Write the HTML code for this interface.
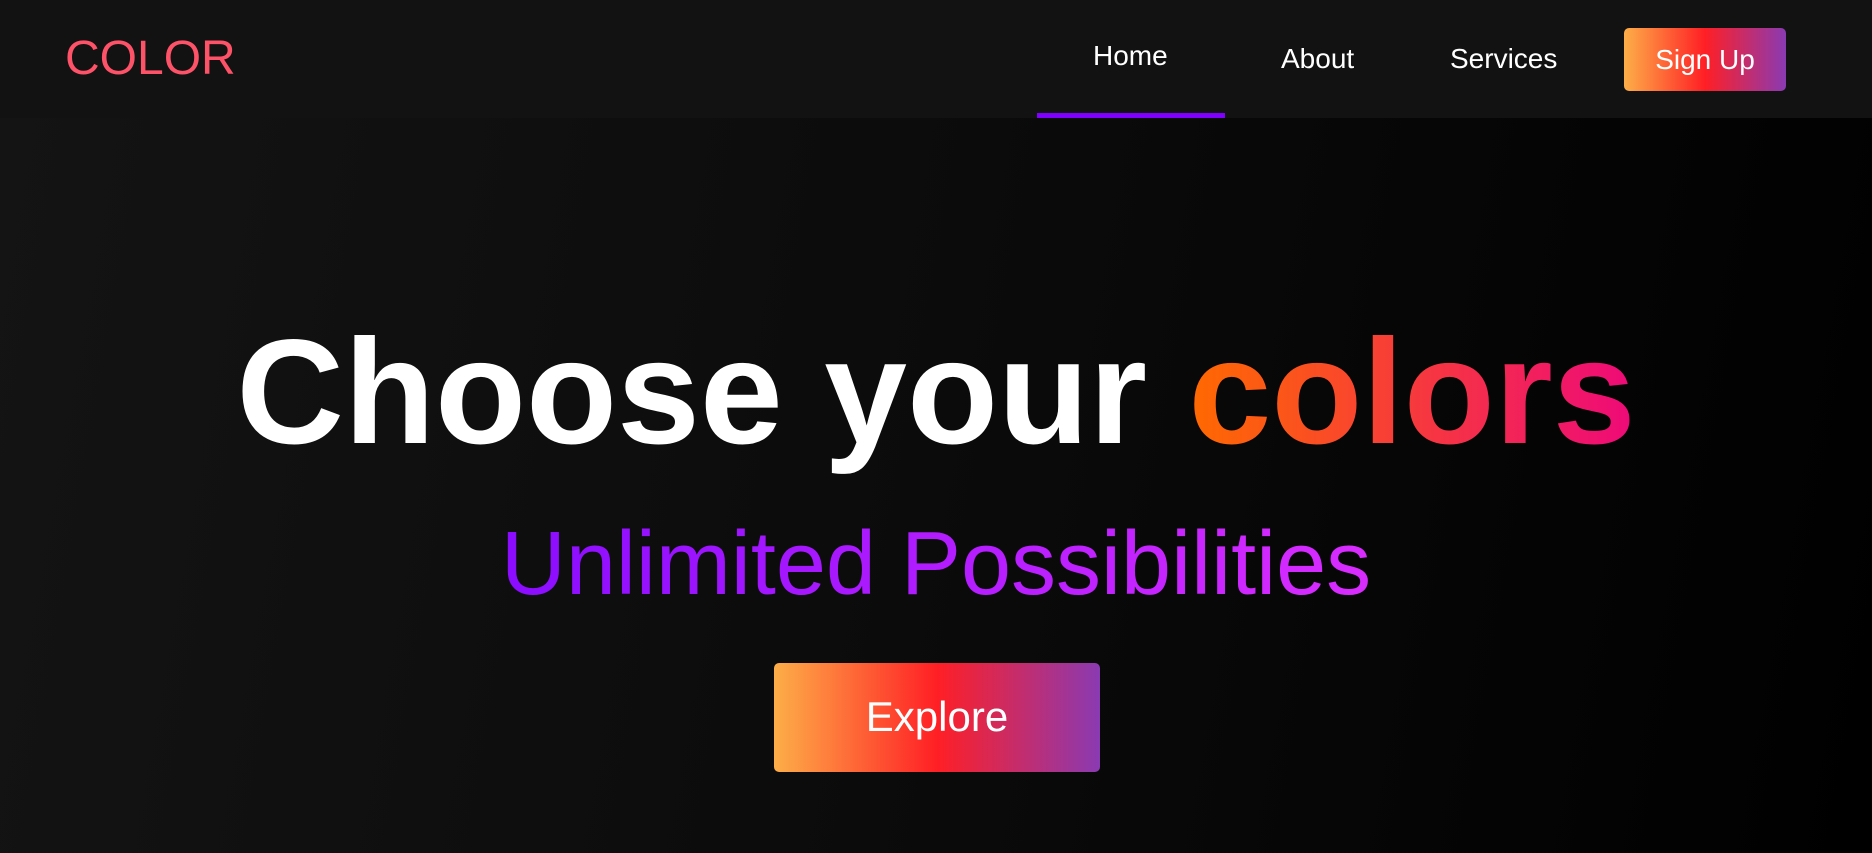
<!DOCTYPE html>
<html><head><meta charset="utf-8"><style>
*{margin:0;padding:0;box-sizing:border-box}
html,body{width:1872px;height:853px;overflow:hidden;font-family:"Liberation Sans",Arial,sans-serif}
body{background:linear-gradient(100deg,#141414 0%,#0b0b0b 50%,#000 100%);position:relative}
nav{position:absolute;left:0;top:0;width:1872px;height:118px;background:#121212}
.logo{position:absolute;left:65px;top:31px;font-size:48px;color:#fd5268;line-height:56px}
.nl{position:absolute;color:#fff;font-size:28px;line-height:32px}
.ul{position:absolute;left:1037px;top:113px;width:188px;height:5px;background:#8000ff}
.btn{position:absolute;border-radius:5px;color:#fff;text-align:center;background:linear-gradient(to right,#fdae48,#ff1f25 50%,#8a3ab2)}
h1{position:absolute;left:0;width:1872px;top:307px;text-align:center;font-size:149px;font-weight:bold;color:#fff;line-height:170px}
.g1{background:linear-gradient(to right,#ff6a00,#ee0979);-webkit-background-clip:text;background-clip:text;color:transparent}
.sub{position:absolute;left:0;width:1872px;top:512px;text-align:center;font-size:90px;line-height:104px}
.sub span{background:linear-gradient(to right,#8a0cff,#d92cff);-webkit-background-clip:text;background-clip:text;color:transparent}
</style></head><body>
<nav>
<div class="logo">COLOR</div>
<div class="nl" style="left:1093px;top:40px">Home</div>
<div class="nl" style="left:1281px;top:43px">About</div>
<div class="nl" style="left:1450px;top:43px">Services</div>
<div class="ul"></div>
<div class="btn" style="left:1624px;top:28px;width:162px;height:63px;font-size:28px;line-height:63px">Sign Up</div>
</nav>
<h1>Choose your <span class="g1">colors</span></h1>
<div class="sub"><span>Unlimited Possibilities</span></div>
<div class="btn" style="left:774px;top:663px;width:326px;height:109px;font-size:42px;line-height:107px">Explore</div>
</body></html>
